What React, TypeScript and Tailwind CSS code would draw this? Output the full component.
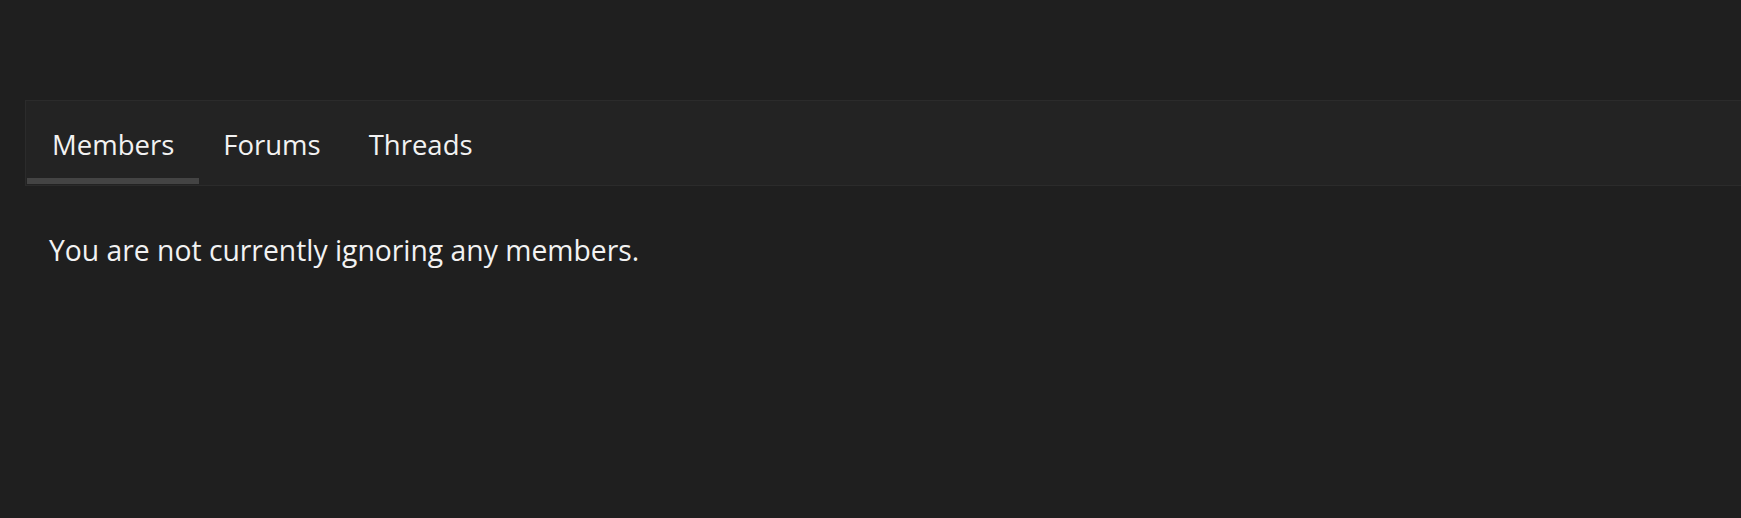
export default function App() {
    const tabs = ["Members", "Forums", "Threads"]
    const active = "Members"

    return (
        <div className="min-h-screen bg-[#1f1f1f] pt-[100px] pl-[25px] text-[#f2f2f2] font-['Open_Sans',sans-serif]">
            {/* Tab bar */}
            <div className="flex h-[86px] border-y border-l border-[#2b2b2b] bg-[#232323] pl-px">
                {tabs.map((tab) => (
                    <div
                        key={tab}
                        className={
                            tab === active
                                ? "flex items-center px-[25px] pt-[10px] mb-px border-b-[6px] border-[#444444] text-[27.5px] leading-none"
                                : "flex items-center px-[24px] pt-[10px] mb-px border-b-[6px] border-transparent text-[27.5px] leading-none"
                        }
                    >
                        {tab}
                    </div>
                ))}
            </div>

            {/* Content */}
            <div className="pl-6 pt-[50px]">
                <p className="text-[28.3px] leading-none">You are not currently ignoring any members.</p>
            </div>
        </div>
    )
}
